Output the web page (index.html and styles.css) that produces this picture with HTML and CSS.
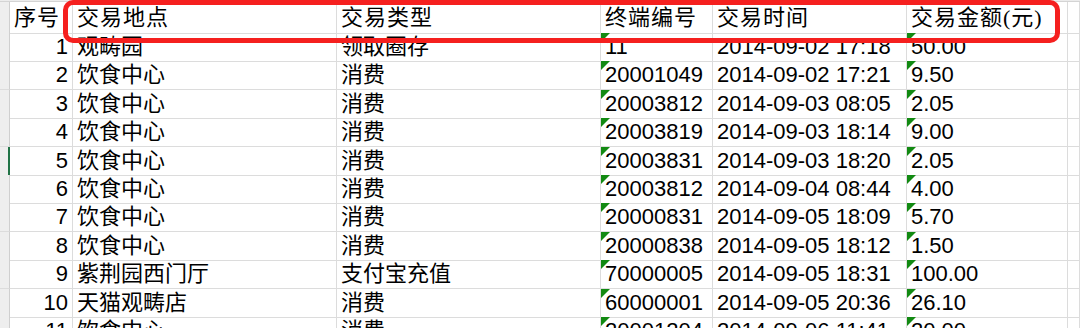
FILE: index.html
```html
<!DOCTYPE html>
<html lang="zh-CN">
<head>
<meta charset="utf-8">
<title>交易记录</title>
<link rel="stylesheet" href="styles.css">
</head>
<body>
<div class="sheet">
  <div class="topbar"></div>
  <div class="row head">
    <div class="rh"></div>
    <div class="c">序号</div>
    <div class="c">交易地点</div>
    <div class="c">交易类型</div>
    <div class="c">终端编号</div>
    <div class="c">交易时间</div>
    <div class="c">交易金额(元)</div>
    <div class="c"></div>
  </div>
  <div class="row"><div class="rh"></div><div class="c num">1</div><div class="c">观畴园</div><div class="c">领取圈存</div><div class="c t">11</div><div class="c">2014-09-02 17:18</div><div class="c t">50.00</div><div class="c"></div></div>
  <div class="row"><div class="rh"></div><div class="c num">2</div><div class="c">饮食中心</div><div class="c">消费</div><div class="c t">20001049</div><div class="c">2014-09-02 17:21</div><div class="c t">9.50</div><div class="c"></div></div>
  <div class="row"><div class="rh"></div><div class="c num">3</div><div class="c">饮食中心</div><div class="c">消费</div><div class="c t">20003812</div><div class="c">2014-09-03 08:05</div><div class="c t">2.05</div><div class="c"></div></div>
  <div class="row"><div class="rh"></div><div class="c num">4</div><div class="c">饮食中心</div><div class="c">消费</div><div class="c t">20003819</div><div class="c">2014-09-03 18:14</div><div class="c t">9.00</div><div class="c"></div></div>
  <div class="row"><div class="rh sel"></div><div class="c num">5</div><div class="c">饮食中心</div><div class="c">消费</div><div class="c t">20003831</div><div class="c">2014-09-03 18:20</div><div class="c t">2.05</div><div class="c"></div></div>
  <div class="row"><div class="rh"></div><div class="c num">6</div><div class="c">饮食中心</div><div class="c">消费</div><div class="c t">20003812</div><div class="c">2014-09-04 08:44</div><div class="c t">4.00</div><div class="c"></div></div>
  <div class="row"><div class="rh"></div><div class="c num">7</div><div class="c">饮食中心</div><div class="c">消费</div><div class="c t">20000831</div><div class="c">2014-09-05 18:09</div><div class="c t">5.70</div><div class="c"></div></div>
  <div class="row"><div class="rh"></div><div class="c num">8</div><div class="c">饮食中心</div><div class="c">消费</div><div class="c t">20000838</div><div class="c">2014-09-05 18:12</div><div class="c t">1.50</div><div class="c"></div></div>
  <div class="row"><div class="rh"></div><div class="c num">9</div><div class="c">紫荆园西门厅</div><div class="c">支付宝充值</div><div class="c t">70000005</div><div class="c">2014-09-05 18:31</div><div class="c t">100.00</div><div class="c"></div></div>
  <div class="row"><div class="rh"></div><div class="c num">10</div><div class="c">天猫观畴店</div><div class="c">消费</div><div class="c t">60000001</div><div class="c">2014-09-05 20:36</div><div class="c t">26.10</div><div class="c"></div></div>
  <div class="row"><div class="rh"></div><div class="c num">11</div><div class="c">饮食中心</div><div class="c">消费</div><div class="c t">20001204</div><div class="c">2014-09-06 11:41</div><div class="c t">20.00</div><div class="c"></div></div>
  <div class="highlight"></div>
</div>
</body>
</html>
```

FILE: styles.css
```css
html, body {
  margin: 0;
  padding: 0;
  background: #ffffff;
}

.sheet {
  position: relative;
  width: 1080px;
  height: 328px;
  overflow: hidden;
  font-family: "Liberation Sans", "Noto Sans CJK SC", sans-serif;
  font-size: 22px;
  color: #000000;
}

.topbar {
  height: 2px;
  box-sizing: border-box;
  background: #ececec;
  border-bottom: 1px solid #d4d4d4;
}

.row {
  display: grid;
  grid-template-columns: 10px 63px 264px 264px 112px 194px 161px 1fr;
  height: 28.4px;
}

.row.head {
  height: 31px;
}

.c, .rh {
  position: relative;
  box-sizing: border-box;
  border-right: 1px solid #dcdcdc;
  border-bottom: 1px solid #dcdcdc;
  padding: 0 4px;
  line-height: 28px;
  white-space: nowrap;
  overflow: visible;
}

.rh {
  padding: 0;
  background: #eeeeee;
  border-right-color: #cfcfcf;
}

.rh.sel {
  border-right: 2px solid #217346;
}

.head .c {
  font-family: "Liberation Serif", "Noto Sans CJK SC", serif;
  font-weight: 400;
  line-height: 31px;
  letter-spacing: 1px;
}

.num {
  text-align: right;
}

.t::before {
  content: "";
  position: absolute;
  left: 0;
  top: 0;
  width: 0;
  height: 0;
  border-top: 9px solid #128a12;
  border-right: 9px solid transparent;
}

.highlight {
  position: absolute;
  left: 63px;
  top: 0;
  width: 997px;
  height: 43px;
  box-sizing: border-box;
  border: 5px solid #f5201f;
  border-radius: 10px;
  pointer-events: none;
}
```
